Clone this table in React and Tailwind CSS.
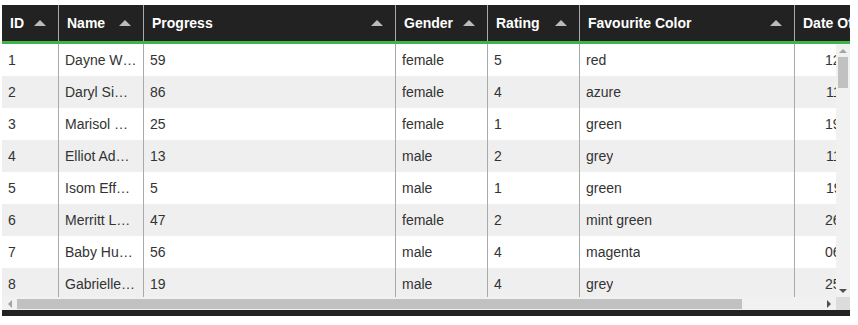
import React from 'react';

const columns = [
    { key: 'id', title: 'ID', width: 57 },
    { key: 'name', title: 'Name', width: 85 },
    { key: 'progress', title: 'Progress', width: 252 },
    { key: 'gender', title: 'Gender', width: 92 },
    { key: 'rating', title: 'Rating', width: 92 },
    { key: 'col', title: 'Favourite Color', width: 215 },
    { key: 'dob', title: 'Date Of Birth', width: 107, align: 'right' },
];

const rows = [
    { id: 1, name: 'Dayne Wisozk', progress: 59, gender: 'female', rating: 5, col: 'red', dob: '12/04/1983' },
    { id: 2, name: 'Daryl Simonis', progress: 86, gender: 'female', rating: 4, col: 'azure', dob: '11/09/1990' },
    { id: 3, name: 'Marisol Kunze', progress: 25, gender: 'female', rating: 1, col: 'green', dob: '19/02/1976' },
    { id: 4, name: 'Elliot Adams', progress: 13, gender: 'male', rating: 2, col: 'grey', dob: '11/07/1985' },
    { id: 5, name: 'Isom Effertz', progress: 5, gender: 'male', rating: 1, col: 'green', dob: '19/11/1994' },
    { id: 6, name: 'Merritt Lubowitz', progress: 47, gender: 'female', rating: 2, col: 'mint green', dob: '26/03/1981' },
    { id: 7, name: 'Baby Hudson', progress: 56, gender: 'male', rating: 4, col: 'magenta', dob: '06/12/1979' },
    { id: 8, name: 'Gabrielle Kihn', progress: 19, gender: 'male', rating: 4, col: 'grey', dob: '25/08/1988' },
];

function SortArrow() {
    return (
        <span className="shrink-0 w-0 h-0 border-x-[6px] border-x-transparent border-b-[6px] border-b-[#bbbbbb] mr-[12px]" />
    );
}

export default function App() {
    return (
        <div className="pt-[5px] px-[2px] font-['Liberation_Sans',Arial,sans-serif] text-[14px]">
            <div className="w-[848px]">
                {/* header */}
                <div className="flex h-[39px] bg-[#222222] border-b-[3px] border-[#3FB449] overflow-hidden">
                    {columns.map((c) => (
                        <div
                            key={c.key}
                            style={{ width: c.width }}
                            className="shrink-0 flex items-center border-r border-[#aaaaaa] pl-[8px] text-white font-bold"
                        >
                            <span className="flex-1 whitespace-nowrap overflow-hidden">{c.title}</span>
                            {c.key !== 'dob' && <SortArrow />}
                        </div>
                    ))}
                </div>

                {/* body + vertical scrollbar */}
                <div className="flex h-[253px]">
                    <div className="w-[834px] overflow-hidden">
                        {rows.map((r, i) => (
                            <div
                                key={r.id}
                                className={`flex h-[32px] text-[#333333] ${i % 2 ? 'bg-[#efefef]' : 'bg-white'}`}
                            >
                                {columns.map((c) => (
                                    <div
                                        key={c.key}
                                        style={{ width: c.width }}
                                        className={`shrink-0 flex items-center px-[6px] border-r border-[#aaaaaa] ${c.align === 'right' ? 'justify-end' : ''}`}
                                    >
                                        <span className="truncate">{r[c.key]}</span>
                                    </div>
                                ))}
                            </div>
                        ))}
                    </div>
                    <div className="w-[14px] bg-[#f1f1f1] flex flex-col items-center">
                        <div className="h-[13px] flex items-center justify-center">
                            <span className="w-0 h-0 border-x-[4px] border-x-transparent border-b-[4px] border-b-[#a3a3a3]" />
                        </div>
                        <div className="w-[10px] h-[31px] bg-[#c1c1c1]" />
                        <div className="flex-1" />
                        <div className="h-[13px] flex items-center justify-center">
                            <span className="w-0 h-0 border-x-[4px] border-x-transparent border-t-[4px] border-t-[#505050]" />
                        </div>
                    </div>
                </div>

                {/* horizontal scrollbar */}
                <div className="flex h-[13px]">
                    <div className="w-[834px] bg-[#f1f1f1] flex items-center">
                        <div className="w-[15px] flex justify-center">
                            <span className="w-0 h-0 border-y-[4px] border-y-transparent border-r-[4px] border-r-[#a3a3a3]" />
                        </div>
                        <div className="w-[725px] h-[10px] bg-[#c1c1c1]" />
                        <div className="flex-1" />
                        <div className="w-[15px] flex justify-center">
                            <span className="w-0 h-0 border-y-[4px] border-y-transparent border-l-[4px] border-l-[#505050]" />
                        </div>
                    </div>
                    <div className="w-[14px] bg-[#dcdcdc]" />
                </div>

                {/* footer */}
                <div className="h-[6px] bg-[#222222]" />
            </div>
        </div>
    );
}
